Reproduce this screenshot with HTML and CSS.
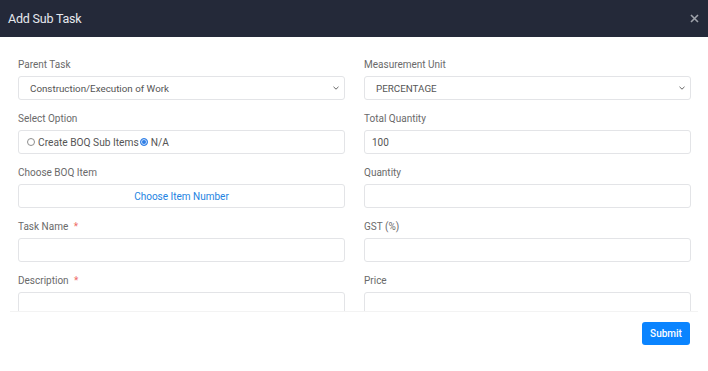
FILE: index.html
```html
<!DOCTYPE html>
<html lang="en">
<head>
<meta charset="utf-8">
<title>Add Sub Task</title>
<link rel="stylesheet" href="styles.css">
</head>
<body>
<div class="modal">
  <div class="modal-header">
    <h1 class="modal-title">Add Sub Task</h1>
    <svg class="close" width="9" height="9" viewBox="0 0 9 9"><path d="M1 1 L8 8 M8 1 L1 8" stroke="#9fa2ab" stroke-width="1.6" fill="none"/></svg>
  </div>
  <div class="modal-body">
    <div class="scroll">
      <form class="form-grid">
        <div class="col">
          <div class="group">
            <label class="label">Parent Task</label>
            <div class="control select"><span>Construction/Execution of Work</span>
              <svg class="chev" width="6" height="4" viewBox="0 0 6 4"><path d="M0.5 0.8 L3 3.2 L5.5 0.8" fill="none" stroke="#666" stroke-width="1"/></svg>
            </div>
          </div>
          <div class="group">
            <label class="label">Select Option</label>
            <div class="control radios">
              <label class="radio"><input type="radio" name="opt"> Create BOQ Sub Items</label>
              <label class="radio"><input type="radio" name="opt" checked> N/A</label>
            </div>
          </div>
          <div class="group">
            <label class="label">Choose BOQ Item</label>
            <div class="control choose">Choose Item Number</div>
          </div>
          <div class="group">
            <label class="label">Task Name <span class="req">*</span></label>
            <div class="control"></div>
          </div>
          <div class="group">
            <label class="label">Description <span class="req">*</span></label>
            <div class="control"></div>
          </div>
        </div>
        <div class="col">
          <div class="group">
            <label class="label">Measurement Unit</label>
            <div class="control select"><span>PERCENTAGE</span>
              <svg class="chev" width="6" height="4" viewBox="0 0 6 4"><path d="M0.5 0.8 L3 3.2 L5.5 0.8" fill="none" stroke="#666" stroke-width="1"/></svg>
            </div>
          </div>
          <div class="group">
            <label class="label">Total Quantity</label>
            <div class="control text">100</div>
          </div>
          <div class="group">
            <label class="label">Quantity</label>
            <div class="control"></div>
          </div>
          <div class="group">
            <label class="label">GST (%)</label>
            <div class="control"></div>
          </div>
          <div class="group">
            <label class="label">Price</label>
            <div class="control"></div>
          </div>
        </div>
      </form>
    </div>
  </div>
  <div class="modal-footer">
    <button class="btn" type="button">Submit</button>
  </div>
</div>
</body>
</html>
```
FILE: styles.css
```css
* { box-sizing: border-box; }
html, body { margin: 0; padding: 0; background: #fff; }
body {
  font-family: Roboto, "Liberation Sans", Arial, sans-serif;
  font-size: 10px;
  color: #666;
}
.modal { width: 708px; height: 371px; background: #fff; }
.modal-header {
  height: 37px;
  background: #242939;
  display: flex;
  align-items: center;
  justify-content: space-between;
  padding: 0 9px 0 8px;
}
.modal-title {
  margin: 0;
  font-size: 12.5px;
  font-weight: 400;
  color: #e6e8ee;
  letter-spacing: -0.2px;
}
.close { display: block; }
.modal-body { padding: 0 10px; }
.scroll {
  height: 275px;
  overflow: hidden;
  border-bottom: 1px solid #f3f3f3;
  padding: 21px 7px 0 8px;
}
.form-grid {
  display: grid;
  grid-template-columns: 1fr 1fr;
  column-gap: 19px;
  margin: 0;
}
.group { margin-bottom: 12px; }
.label {
  display: block;
  height: 14px;
  line-height: 14px;
  margin-bottom: 4px;
  color: #6a6a6a;
}
.req { color: #ee6b66; margin-left: 3px; }
.control {
  height: 24px;
  border: 1px solid #e3e4e7;
  border-radius: 3px;
  background: #fff;
  display: flex;
  align-items: center;
  color: #555;
}
.select {
  justify-content: space-between;
  padding: 0 5px 0 11px;
  font-size: 9.8px;
}
.chev { display: block; }
.text { padding: 0 7px; }
.radios { padding: 0 8px; gap: 1px; color: #555; font-size: 10.2px; }
.radio { display: flex; align-items: center; }
.radio input {
  appearance: none;
  -webkit-appearance: none;
  width: 8px;
  height: 8px;
  margin: 0 3px 0 0;
  border: 1px solid #8e8e8e;
  border-radius: 50%;
  background: #fff;
}
.radio input:checked {
  border-color: #2f7fe6;
  background: #2f7fe6;
  box-shadow: inset 0 0 0 1px #cfe1fb;
}
.choose {
  justify-content: center;
  color: #2383e2;
}
.modal-footer {
  display: flex;
  justify-content: flex-end;
  padding: 10px 18px 0 0;
}
.btn {
  width: 48px;
  height: 23px;
  border: 0;
  border-radius: 3px;
  background: #0a84ff;
  color: #fff;
  font-family: Roboto, "Liberation Sans", Arial, sans-serif;
  font-size: 10px;
  font-weight: 500;
  padding: 0;
}
```
